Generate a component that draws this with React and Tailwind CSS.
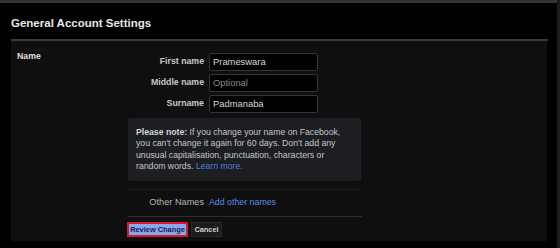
import React from 'react';

function Field({ label, value, placeholder }) {
  return (
    <div className="flex items-center h-[18px]">
      <div className="w-[76px] text-right text-[8.75px] font-bold text-[#c9c9c9]">{label}</div>
      <div className="ml-[5px] w-[109px] h-full flex items-center px-[3px] bg-black border border-[#353535] rounded-[2px] text-[9.4px]">
        {value ? <span className="text-[#d8d8d8]">{value}</span> : <span className="text-[#8a8a8a]">{placeholder}</span>}
      </div>
    </div>
  );
}

export default function App() {
  return (
    <div className="flex w-[560px] h-[248px] bg-black overflow-hidden font-['Liberation_Sans',Arial,sans-serif]">
      <div className="w-[557px] flex flex-col">
        <div className="h-[3px] bg-[#333333]" />
        <h1 className="pl-[11px] pt-[13px] text-[11.5px] leading-[14px] font-bold text-[#e8e8e8]">General Account Settings</h1>
        <div className="mt-[9px] ml-[11px] w-[537px] h-[2px] bg-[#3a3a3a]" />
        <div className="ml-[11px] w-[536px] h-[200px] bg-[#0f0f0f] flex">
          <div className="w-[117px] pl-[6px] pt-[10px] text-[8.75px] leading-[11px] font-bold text-[#dedede]">Name</div>
          <div className="flex flex-col pt-[12px]">
            <div className="flex flex-col gap-[3px]">
              <Field label="First name" value="Prameswara" />
              <Field label="Middle name" placeholder="Optional" />
              <Field label="Surname" value="Padmanaba" />
            </div>
            <div className="mt-[5px] w-[233px] h-[63px] px-[8px] py-[9px] bg-[#1c1e21] rounded-[2px] text-[8.7px] leading-[11.3px] text-[#c4c6c9] whitespace-nowrap">
              <span className="font-bold text-[#d4d4d4]">Please note:</span> If you change your name on Facebook,<br />
              you can't change it again for 60 days. Don't add any<br />
              unusual capitalisation, punctuation, characters or<br />
              random words. <span className="text-[#4d80d8]">Learn more.</span>
            </div>
            <div className="mt-[8px] w-[234px] h-[1px] bg-[#1e1e1e]" />
            <div className="h-[26px] flex items-center text-[9.2px]">
              <div className="w-[76px] text-right text-[#b4b4b4]">Other Names</div>
              <div className="ml-[5px] text-[8.8px] text-[#5a8de6]">Add other names</div>
            </div>
            <div className="w-[234px] h-[1px] bg-[#2c2c2c]" />
            <div className="mt-[5px] -ml-[1px] flex gap-[3px]">
              <button className="h-[15px] w-[61px] border-2 border-[#e3122c] bg-[#85a8ef] text-[7.4px] font-bold text-[#16233f] leading-none">
                Review Change
              </button>
              <button className="h-[15px] w-[31px] border border-[#2a2a2a] bg-[#1b1b1b] text-[7.4px] font-bold text-[#cfcfcf] leading-none">
                Cancel
              </button>
            </div>
          </div>
        </div>
      </div>
      <div className="w-[3px] h-full bg-[#1c1c1c]" />
    </div>
  );
}
